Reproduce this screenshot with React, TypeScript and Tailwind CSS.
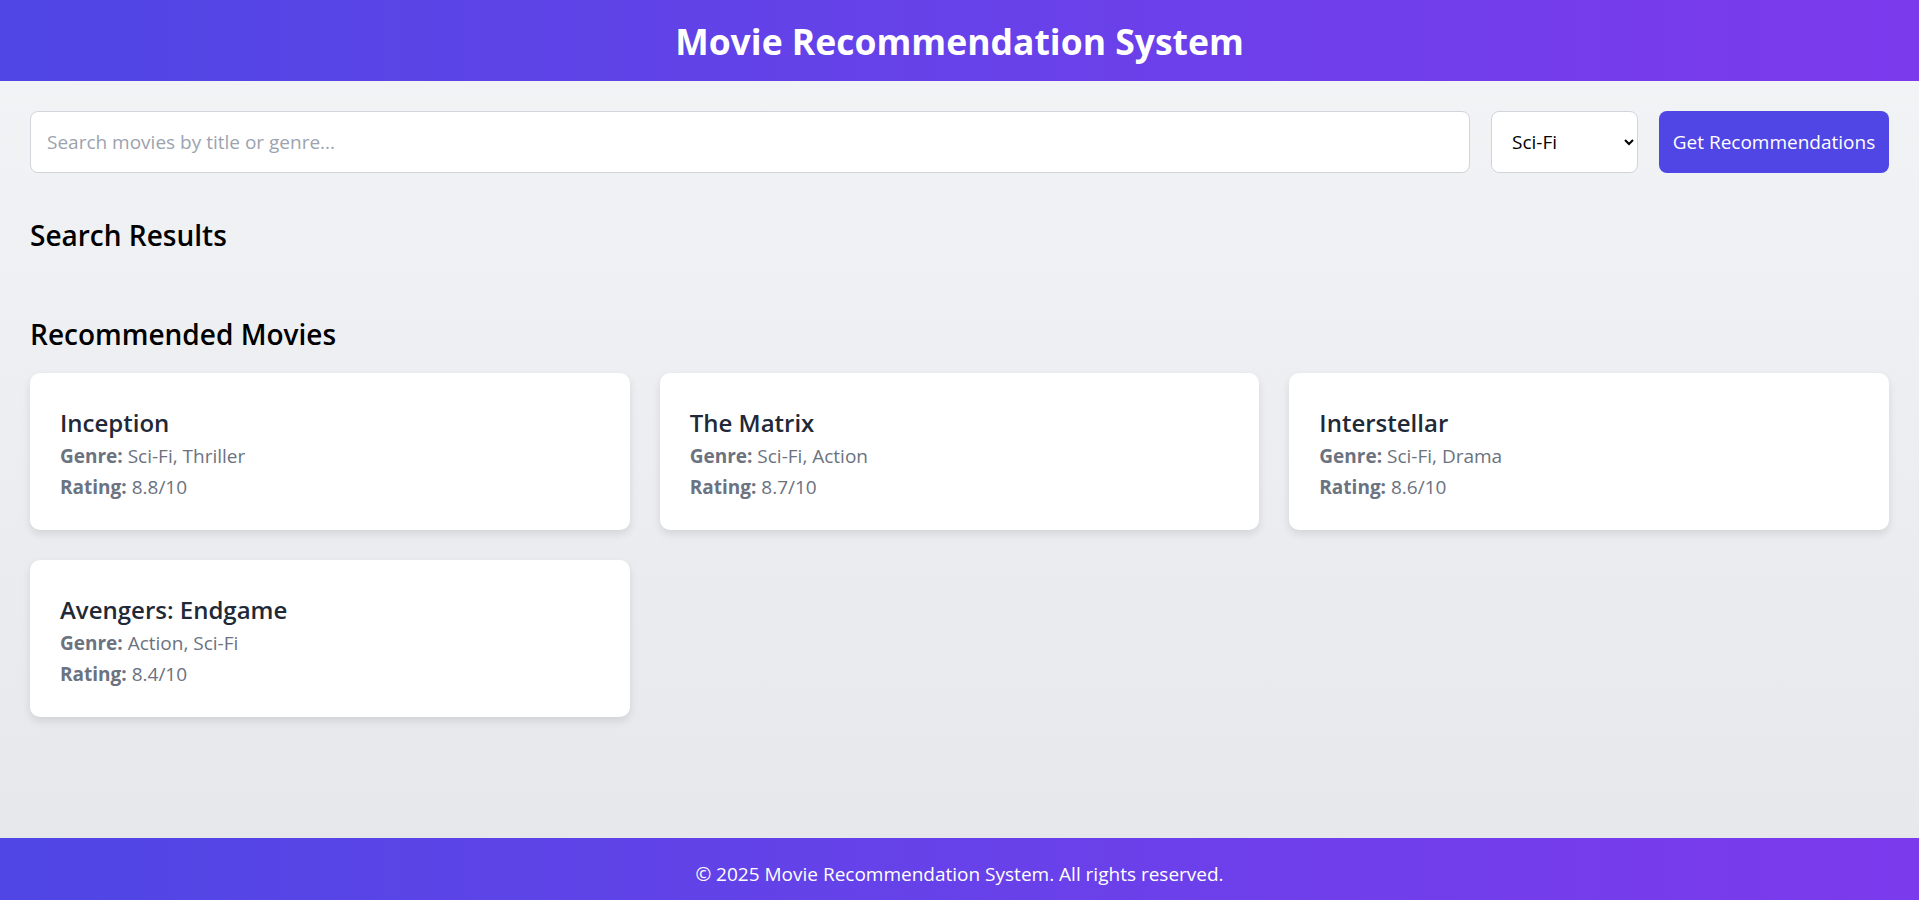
import { useState } from 'react';

interface Movie {
  title: string;
  genre: string;
  rating: number;
}

const movies: Movie[] = [
  { title: 'Inception', genre: 'Sci-Fi, Thriller', rating: 8.8 },
  { title: 'The Matrix', genre: 'Sci-Fi, Action', rating: 8.7 },
  { title: 'Interstellar', genre: 'Sci-Fi, Drama', rating: 8.6 },
  { title: 'Avengers: Endgame', genre: 'Action, Sci-Fi', rating: 8.4 },
];

function MovieCard({ movie }: { movie: Movie }) {
  return (
    <div className="bg-white rounded-[10px] shadow-[0_4px_8px_rgba(0,0,0,0.1)] px-[30px] pt-[34px] pb-[29px]">
      <h3 className="text-[24px] leading-[32px] font-semibold text-[#1f2937]">{movie.title}</h3>
      <p className="mt-[3px] text-[19px] leading-[28px] text-[#6b7280]">
        <span className="font-bold">Genre:</span> {movie.genre}
      </p>
      <p className="mt-[3px] text-[19px] leading-[28px] text-[#6b7280]">
        <span className="font-bold">Rating:</span> {movie.rating}/10
      </p>
    </div>
  );
}

export default function App() {
  const [query, setQuery] = useState('');
  const [genre, setGenre] = useState('Sci-Fi');

  return (
    <div className="min-h-screen flex flex-col bg-gradient-to-b from-[#f3f4f6] to-[#e5e7eb] font-['Segoe_UI','Open_Sans',sans-serif] text-black">
      {/* Header */}
      <header className="h-[81px] flex items-center justify-center bg-gradient-to-r from-[#4f46e5] to-[#7c3aed]">
        <h1 className="text-[35.5px] leading-[40px] font-bold text-white">Movie Recommendation System</h1>
      </header>

      <main className="flex-1 px-[30px] pt-[30px]">
        {/* Search bar */}
        <div className="flex gap-[21px]">
          <input
            type="text"
            value={query}
            onChange={(e) => setQuery(e.target.value)}
            placeholder="Search movies by title or genre..."
            className="flex-1 h-[62px] px-4 text-[19px] bg-white border border-[#d1d5db] rounded-lg outline-none placeholder:text-[#9ca3af]"
          />
          <select
            value={genre}
            onChange={(e) => setGenre(e.target.value)}
            className="w-[147px] h-[62px] px-4 text-[19px] bg-white border border-[#d1d5db] rounded-lg outline-none"
          >
            <option>All</option>
            <option>Action</option>
            <option>Drama</option>
            <option>Sci-Fi</option>
            <option>Thriller</option>
          </select>
          <button className="w-[230px] h-[62px] px-3 text-[19px] text-white bg-[#4f46e5] rounded-lg">
            Get Recommendations
          </button>
        </div>

        {/* Search results */}
        <h2 className="mt-[46px] text-[28px] leading-[32px] font-semibold">Search Results</h2>

        {/* Recommendations */}
        <h2 className="mt-[67px] text-[28px] leading-[32px] font-semibold">Recommended Movies</h2>
        <div className="mt-[23px] grid grid-cols-3 gap-[30px]">
          {movies.map((m) => (
            <MovieCard key={m.title} movie={m} />
          ))}
        </div>
      </main>

      {/* Footer */}
      <footer className="h-[62px] pt-[22px] flex justify-center bg-gradient-to-r from-[#4f46e5] to-[#7c3aed]">
        <p className="text-[19px] leading-[28px] text-white">© 2025 Movie Recommendation System. All rights reserved.</p>
      </footer>
    </div>
  );
}
